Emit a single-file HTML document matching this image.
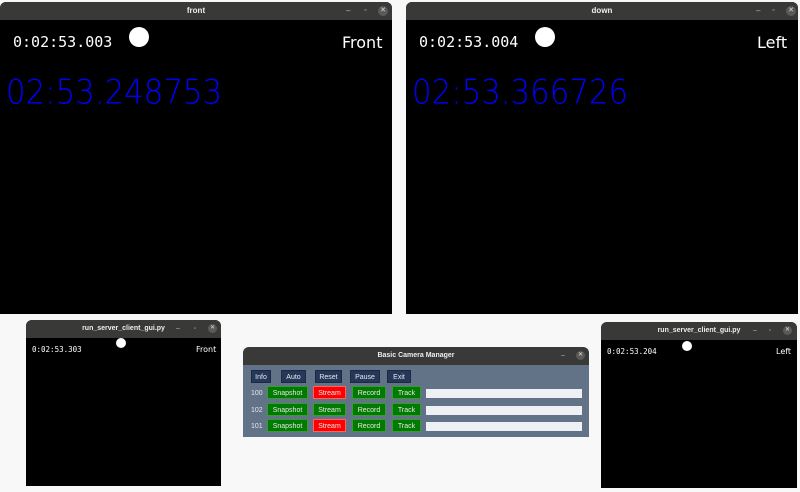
<!DOCTYPE html>
<html><head><style>
body{margin:0;width:800px;height:492px;background:#f8f8f8;position:relative;overflow:hidden;font-family:"Liberation Sans",sans-serif}
.w{position:absolute;background:#000;border-radius:6px 6px 0 0;overflow:hidden}
.tb{position:absolute;left:0;right:0;top:0;background:#393937;color:#eee;font-weight:bold;text-align:center;font-size:8px}
.ctl{position:absolute;top:0;color:#bbb}
.x{position:absolute;border-radius:50%;background:#5a5a58;color:#ddd;text-align:center}
.dot{position:absolute;background:#fff;border-radius:50%}
.mono{position:absolute;color:#fff;font-family:"DejaVu Sans Mono",monospace}
.lbl{position:absolute;color:#fff;font-family:"DejaVu Sans",sans-serif}
.blue{position:absolute;color:#0000ff;font-family:"DejaVu Sans ExtraLight","DejaVu Sans",sans-serif;font-weight:200;font-size:28px;line-height:28px;transform:scale(1.1,1.2);transform-origin:0 0;white-space:nowrap}
.cm{position:absolute;left:243px;top:347px;width:346px;height:90px;background:#637387;border-radius:6px 6px 0 0;overflow:hidden}
.b{position:absolute;height:13px;font-size:7px;line-height:13px;text-align:center;color:#e8e8e8;box-sizing:border-box}
.nv{background:#26385a;border:1px solid #1a2a44}
.g{background:#007a00;border:1px solid #3a9a3a}
.r{background:#ff0000;border:1px solid #ff6060}
.bar{position:absolute;left:183px;width:156px;height:9px;background:#eef1f4}
.n{position:absolute;left:8px;font-size:7px;line-height:13px;color:#e8e8e8}
</style></head><body>

<div class="w" style="left:0;top:2px;width:392px;height:312px">
 <div class="tb" style="height:18px;line-height:18px">front</div>
 <div class="ctl" style="left:346px;line-height:18px;font-size:8px">–</div>
 <div class="ctl" style="left:364px;line-height:18px;font-size:7px">▫</div>
 <div class="x" style="left:378px;top:4px;width:10px;height:10px;line-height:10px;font-size:7px">✕</div>
 <div class="mono" style="left:13px;top:31px;font-size:15px">0:02:53.003</div>
 <div class="dot" style="left:129px;top:25px;width:20px;height:20px"></div>
 <div class="lbl" style="left:342px;top:31px;font-size:16px">Front</div>
 <div class="blue" style="left:6px;top:74px">02:53.248753</div>
</div>

<div class="w" style="left:406px;top:2px;width:392px;height:312px">
 <div class="tb" style="height:18px;line-height:18px">down</div>
 <div class="ctl" style="left:350px;line-height:18px;font-size:8px">–</div>
 <div class="ctl" style="left:366px;line-height:18px;font-size:7px">▫</div>
 <div class="x" style="left:380px;top:4px;width:10px;height:10px;line-height:10px;font-size:7px">✕</div>
 <div class="mono" style="left:13px;top:31px;font-size:15px">0:02:53.004</div>
 <div class="dot" style="left:129px;top:25px;width:20px;height:20px"></div>
 <div class="lbl" style="left:351px;top:31px;font-size:16px">Left</div>
 <div class="blue" style="left:6px;top:74px">02:53.366726</div>
</div>

<div class="w" style="left:26px;top:320px;width:195px;height:166px">
 <div class="tb" style="height:18px;line-height:18px;font-size:7px">run_server_client_gui.py</div>
 <div class="ctl" style="left:150px;line-height:18px;font-size:7px">–</div>
 <div class="ctl" style="left:168px;line-height:18px;font-size:6px">▫</div>
 <div class="x" style="left:182px;top:4px;width:9px;height:9px;line-height:9px;font-size:6px">✕</div>
 <div class="dot" style="left:90px;top:18px;width:10px;height:10px"></div>
 <div class="mono" style="left:6px;top:25px;font-size:7.5px">0:02:53.303</div>
 <div class="lbl" style="left:170px;top:25px;font-size:8px">Front</div>
</div>

<div class="w" style="left:601px;top:322px;width:196px;height:166px">
 <div class="tb" style="height:18px;line-height:18px;font-size:7px">run_server_client_gui.py</div>
 <div class="ctl" style="left:152px;line-height:18px;font-size:7px">–</div>
 <div class="ctl" style="left:168px;line-height:18px;font-size:6px">▫</div>
 <div class="x" style="left:182px;top:4px;width:9px;height:9px;line-height:9px;font-size:6px">✕</div>
 <div class="dot" style="left:81px;top:19px;width:10px;height:10px"></div>
 <div class="mono" style="left:6px;top:25px;font-size:7.5px">0:02:53.204</div>
 <div class="lbl" style="left:175px;top:25px;font-size:8px">Left</div>
</div>

<div class="cm">
 <div class="tb" style="height:18px;line-height:18px;font-size:7px">Basic Camera Manager</div>
 <div class="ctl" style="left:318px;line-height:18px;font-size:7px">–</div>
 <div class="x" style="left:333px;top:4px;width:9px;height:9px;line-height:9px;font-size:6px">✕</div>
 <div class="b nv" style="left:8px;top:23px;width:20px">Info</div>
 <div class="b nv" style="left:38px;top:23px;width:25px">Auto</div>
 <div class="b nv" style="left:72px;top:23px;width:27px">Reset</div>
 <div class="b nv" style="left:107px;top:23px;width:30px">Pause</div>
 <div class="b nv" style="left:144px;top:23px;width:24px">Exit</div>

 <div class="n" style="top:40px">100</div>
 <div class="b g" style="left:24px;top:39px;width:41px">Snapshot</div>
 <div class="b r" style="left:70px;top:39px;width:33px">Stream</div>
 <div class="b g" style="left:109px;top:39px;width:34px">Record</div>
 <div class="b g" style="left:149px;top:39px;width:29px">Track</div>
 <div class="bar" style="top:42px"></div>

 <div class="n" style="top:57px">102</div>
 <div class="b g" style="left:24px;top:56px;width:41px">Snapshot</div>
 <div class="b g" style="left:70px;top:56px;width:33px">Stream</div>
 <div class="b g" style="left:109px;top:56px;width:34px">Record</div>
 <div class="b g" style="left:149px;top:56px;width:29px">Track</div>
 <div class="bar" style="top:59px"></div>

 <div class="n" style="top:73px">101</div>
 <div class="b g" style="left:24px;top:72px;width:41px">Snapshot</div>
 <div class="b r" style="left:70px;top:72px;width:33px">Stream</div>
 <div class="b g" style="left:109px;top:72px;width:34px">Record</div>
 <div class="b g" style="left:149px;top:72px;width:29px">Track</div>
 <div class="bar" style="top:75px"></div>
</div>
</body></html>
